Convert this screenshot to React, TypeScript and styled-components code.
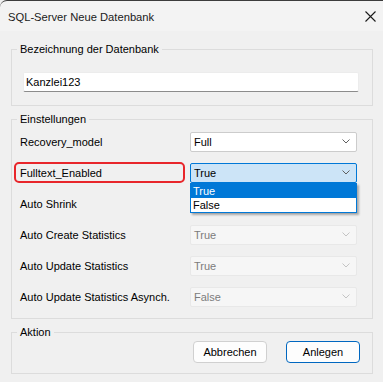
import styled, { createGlobalStyle } from 'styled-components';

const GlobalStyle = createGlobalStyle`
  html, body {
    margin: 0;
    padding: 0;
    background: #f0f0f0;
  }
  body {
    font-family: "Liberation Sans", Arial, sans-serif;
    font-size: 11px;
    color: #000;
  }
`;

const Window = styled.div`
  width: 383px;
  height: 382px;
  overflow: hidden;
  background: #f0f0f0;
`;

const TitleBar = styled.div`
  height: 30px;
  border-top: 1px solid #3c3c3c;
  border-top-left-radius: 7px;
  background: #f3f3f3;
  display: flex;
  align-items: center;
  justify-content: space-between;
  padding: 0 7px 0 8px;
`;

const Title = styled.span`
  font-size: 11.2px;
  color: #1a1a1a;
  margin-top: 1px;
`;

const Body = styled.div`
  padding: 11px 0 0 11px;
  display: flex;
  flex-direction: column;
  gap: 6px;
`;

const Group = styled.fieldset<{ $height: number }>`
  box-sizing: border-box;
  width: 362px;
  height: ${(p) => p.$height}px;
  margin: 0;
  padding: 0;
  border: 1px solid #dcdcdc;
  min-width: 0;
  position: relative;
`;

const Legend = styled.legend`
  margin-left: 5px;
  padding: 0 3px;
  font-size: 11px;
  line-height: 14px;
`;

const NameArea = styled.div`
  padding: 16px 0 0 11px;
`;

const TextBox = styled.div`
  box-sizing: border-box;
  width: 336px;
  height: 20px;
  background: #fff;
  border: 1px solid #ececec;
  border-bottom-color: #8c8c8c;
  border-radius: 2px;
  padding: 0 2px;
  display: flex;
  align-items: center;
`;

const Rows = styled.div`
  display: flex;
  flex-direction: column;
  gap: 10px;
  padding: 5px 0 0 2px;
`;

const Row = styled.div`
  display: grid;
  grid-template-columns: 171px 167px;
  column-gap: 5px;
  align-items: center;
  height: 21px;
`;

const Label = styled.div<{ $highlight?: boolean }>`
  box-sizing: border-box;
  height: 21px;
  border: 2px solid ${(p) => (p.$highlight ? '#e8262b' : 'transparent')};
  border-radius: 5px;
  padding-left: 4px;
  display: flex;
  align-items: center;
`;

const SelectWrap = styled.div`
  position: relative;
`;

type SelectState = 'normal' | 'open' | 'disabled' | 'covered';

const Select = styled.div<{ $state: SelectState }>`
  box-sizing: border-box;
  height: 20px;
  padding: 0 6px 0 3px;
  display: flex;
  align-items: center;
  justify-content: space-between;
  border-radius: 2px;
  background: ${(p) =>
    p.$state === 'open' ? '#cce4f7' : p.$state === 'normal' ? '#fff' : '#f6f6f6'};
  border: 1px solid
    ${(p) => (p.$state === 'open' ? '#0078d7' : p.$state === 'normal' ? '#cccccc' : '#e8e8e8')};
  color: ${(p) => (p.$state === 'normal' || p.$state === 'open' ? '#000' : '#7c7c7c')};
`;

const DropList = styled.div`
  position: absolute;
  top: 100%;
  left: 0;
  width: 167px;
  box-sizing: border-box;
  background: #fff;
  border: 1px solid #0078d7;
  box-shadow: 2px 2px 2px rgba(0, 0, 0, 0.3);
  z-index: 2;
`;

const DropItem = styled.div<{ $selected?: boolean }>`
  height: 14px;
  line-height: 14px;
  padding-left: 2px;
  background: ${(p) => (p.$selected ? '#0078d7' : '#fff')};
  color: ${(p) => (p.$selected ? '#fff' : '#000')};
`;

const ButtonBar = styled.div`
  display: flex;
  justify-content: flex-end;
  gap: 19px;
  padding: 2px 12px 0 0;
`;

const Button = styled.button<{ $primary?: boolean }>`
  box-sizing: border-box;
  width: 74px;
  height: 22px;
  font-family: "Liberation Sans", Arial, sans-serif;
  font-size: 11px;
  color: #000;
  background: #fdfdfd;
  border: 1px solid ${(p) => (p.$primary ? '#0067c0' : '#d0d0d0')};
  border-radius: 4px;
  padding: 0;
`;

function Chevron({ color = '#606060' }: { color?: string }) {
  return (
    <svg width="8" height="5" viewBox="0 0 8 5">
      <polyline points="0.5,0.5 4,4 7.5,0.5" fill="none" stroke={color} strokeWidth="1" />
    </svg>
  );
}

function CloseIcon() {
  return (
    <svg width="11" height="11" viewBox="0 0 11 11">
      <path d="M0.5 0.5 L10.5 10.5 M10.5 0.5 L0.5 10.5" stroke="#1a1a1a" strokeWidth="1.1" />
    </svg>
  );
}

const settings: {
  label: string;
  value: string;
  state: SelectState;
  highlight?: boolean;
}[] = [
  { label: 'Recovery_model', value: 'Full', state: 'normal' },
  { label: 'Fulltext_Enabled', value: 'True', state: 'open', highlight: true },
  // this one sits under the open list, so its value is not visible
  { label: 'Auto Shrink', value: '', state: 'covered' },
  { label: 'Auto Create Statistics', value: 'True', state: 'disabled' },
  { label: 'Auto Update Statistics', value: 'True', state: 'disabled' },
  { label: 'Auto Update Statistics Asynch.', value: 'False', state: 'disabled' },
];

export default function App() {
  return (
    <>
      <GlobalStyle />
      <Window>
        <TitleBar>
          <Title>SQL-Server Neue Datenbank</Title>
          <CloseIcon />
        </TitleBar>
        <Body>
          <Group $height={64}>
            <Legend>Bezeichnung der Datenbank</Legend>
            <NameArea>
              <TextBox>Kanzlei123</TextBox>
            </NameArea>
          </Group>
          <Group $height={207}>
            <Legend>Einstellungen</Legend>
            <Rows>
              {settings.map((s) => (
                <Row key={s.label}>
                  <Label $highlight={s.highlight}>{s.label}</Label>
                  <SelectWrap>
                    <Select $state={s.state}>
                      <span>{s.value}</span>
                      <Chevron color={s.state === 'normal' || s.state === 'open' ? '#606060' : '#c4c4c4'} />
                    </Select>
                    {s.state === 'open' && (
                      <DropList>
                        <DropItem $selected>True</DropItem>
                        <DropItem>False</DropItem>
                      </DropList>
                    )}
                  </SelectWrap>
                </Row>
              ))}
            </Rows>
          </Group>
          <Group $height={49}>
            <Legend>Aktion</Legend>
            <ButtonBar>
              <Button>Abbrechen</Button>
              <Button $primary>Anlegen</Button>
            </ButtonBar>
          </Group>
        </Body>
      </Window>
    </>
  );
}
